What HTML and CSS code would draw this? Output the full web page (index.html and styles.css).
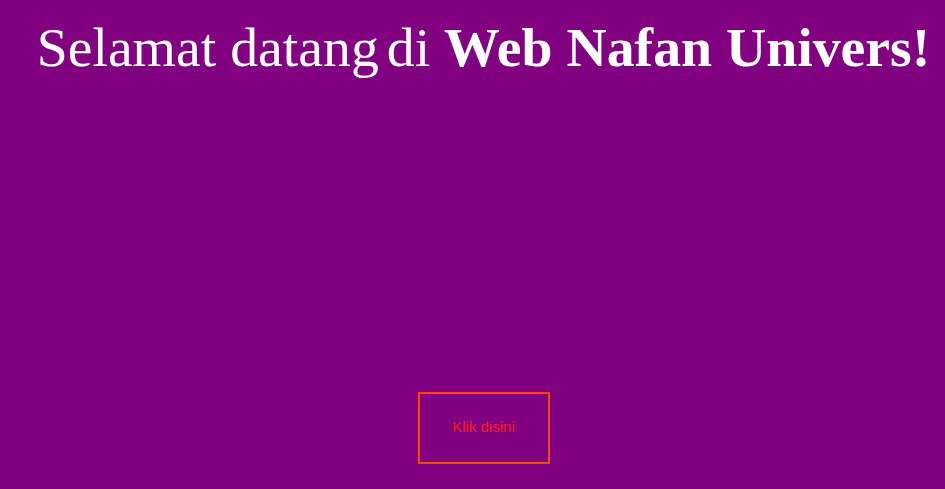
FILE: index.html
```html
<!DOCTYPE html>
<html>
<head>
<meta charset="utf-8">
<link rel="stylesheet" href="styles.css">
</head>
<body>
<main class="page">
  <h1 class="title"><span>Selamat datang</span><span class="di">di</span> <strong>Web Nafan Univers!</strong></h1>
  <button class="btn">Klik disini</button>
</main>
</body>
</html>
```
FILE: styles.css
```css
html, body {
  margin: 0;
  padding: 0;
  background: #800080;
  height: 100%;
  overflow: hidden;
}
.page {
  display: flex;
  flex-direction: column;
  align-items: center;
  padding-left: 22px;
}
.title {
  margin: 15px 0 0 0;
  font-family: "Liberation Serif", serif;
  font-weight: normal;
  font-size: 55.75px;
  line-height: 64px;
  color: #fff;
  white-space: nowrap;
}
.di {
  margin-left: 8px;
}
.title strong {
  font-weight: bold;
}
.btn {
  margin-top: 313px;
  width: 132px;
  height: 72px;
  background: transparent;
  border: 2px solid #ff4500;
  color: #ff1a1a;
  font-family: "Liberation Sans", Arial, sans-serif;
  font-size: 15px;
  line-height: 18px;
  padding: 0 0 3px 0;
}
```
